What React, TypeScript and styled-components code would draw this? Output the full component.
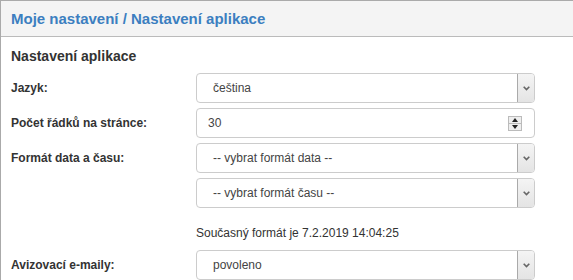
import styled, { createGlobalStyle } from 'styled-components';

const GlobalStyle = createGlobalStyle`
  html, body {
    margin: 0;
    padding: 0;
    background: #fff;
    overflow: hidden;
  }
  body {
    font-family: 'Liberation Sans', Arial, sans-serif;
    color: #333;
  }
`;

interface FieldProps {
  value: string;
}

const Select = ({ value }: FieldProps) => {
  return (
    <SelectBox>
      <SelectText>{value}</SelectText>
      <ArrowBox>
        <svg width='7' height='5' viewBox='0 0 7 5'>
          <path d='M0.7 0.7 L3.5 3.6 L6.3 0.7' fill='none' stroke='#666' strokeWidth='1.6' />
        </svg>
      </ArrowBox>
    </SelectBox>
  );
};

const NumberInput = ({ value }: FieldProps) => {
  return (
    <InputBox>
      <InputText>{value}</InputText>
      <Spinner>
        <SpinHalf>
          <svg width='6' height='4' viewBox='0 0 6 4'>
            <path d='M0 4 L3 0 L6 4 Z' fill='#222' />
          </svg>
        </SpinHalf>
        <SpinHalf $bottom>
          <svg width='6' height='4' viewBox='0 0 6 4'>
            <path d='M0 0 L3 4 L6 0 Z' fill='#222' />
          </svg>
        </SpinHalf>
      </Spinner>
    </InputBox>
  );
};

const App = () => {
  return (
    <>
      <GlobalStyle />
      <Panel>
        <Header>Moje nastavení / Nastavení aplikace</Header>
        <Body>
          <Title>Nastavení aplikace</Title>
          <Form>
            <Label>Jazyk:</Label>
            <Select value='čeština' />

            <Label>Počet řádků na stránce:</Label>
            <NumberInput value='30' />

            <Label>Formát data a času:</Label>
            <Select value='-- vybrat formát data --' />

            <span />
            <Select value='-- vybrat formát času --' />

            <span />
            <Info>Současný formát je 7.2.2019 14:04:25</Info>

            <Label>Avizovací e-maily:</Label>
            <Select value='povoleno' />
          </Form>
        </Body>
      </Panel>
    </>
  );
};

/* panel pokracuje za pravy okraj, proto bez praveho okraje */
const Panel = styled.div`
  border-top: 1px solid #aaa;
  border-left: 1px solid #aaa;
  background: #fff;
`;

const Header = styled.div`
  height: 35px;
  display: flex;
  align-items: center;
  padding: 0 10px;
  background: #f4f4f4;
  border-bottom: 1px solid #bbb;
  color: #3c7fc0;
  font-size: 15px;
  font-weight: bold;
`;

const Body = styled.div`
  padding: 11px 10px 0;
`;

const Title = styled.div`
  font-size: 14px;
  line-height: 16px;
  font-weight: bold;
  color: #333;
  margin-bottom: 9px;
`;

const Form = styled.div`
  display: grid;
  grid-template-columns: 185px 339px;
  row-gap: 5px;
  align-items: center;
`;

const Label = styled.div`
  font-size: 12px;
  font-weight: bold;
  color: #333;
`;

const SelectBox = styled.div`
  height: 30px;
  box-sizing: border-box;
  border: 1px solid #ccc;
  border-radius: 4px;
  display: flex;
  align-items: stretch;
  background: #fff;
`;

const SelectText = styled.div`
  flex: 1;
  display: flex;
  align-items: center;
  padding-left: 16px;
  font-size: 12px;
  color: #444;
`;

const ArrowBox = styled.div`
  width: 16px;
  display: flex;
  align-items: center;
  justify-content: center;
  border-left: 1px solid #aaa;
  border-radius: 0 3px 3px 0;
  background: linear-gradient(#f4f4f4, #e4e4e4);
`;

const InputBox = styled(SelectBox)`
  align-items: center;
  padding-right: 12px;
`;

const InputText = styled.div`
  flex: 1;
  padding-left: 11px;
  font-size: 12px;
  color: #444;
`;

const Spinner = styled.div`
  width: 14px;
  height: 15px;
  box-sizing: border-box;
  border: 1px solid #bbb;
  display: flex;
  flex-direction: column;
  background: #eee;
`;

const SpinHalf = styled.div<{ $bottom?: boolean }>`
  flex: 1;
  display: flex;
  align-items: center;
  justify-content: center;
  border-top: ${({ $bottom }) => ($bottom ? '1px solid #bbb' : 'none')};
`;

const Info = styled.div`
  font-size: 12px;
  line-height: 14px;
  color: #333;
  padding: 13px 0 5px;
`;

export default App;
